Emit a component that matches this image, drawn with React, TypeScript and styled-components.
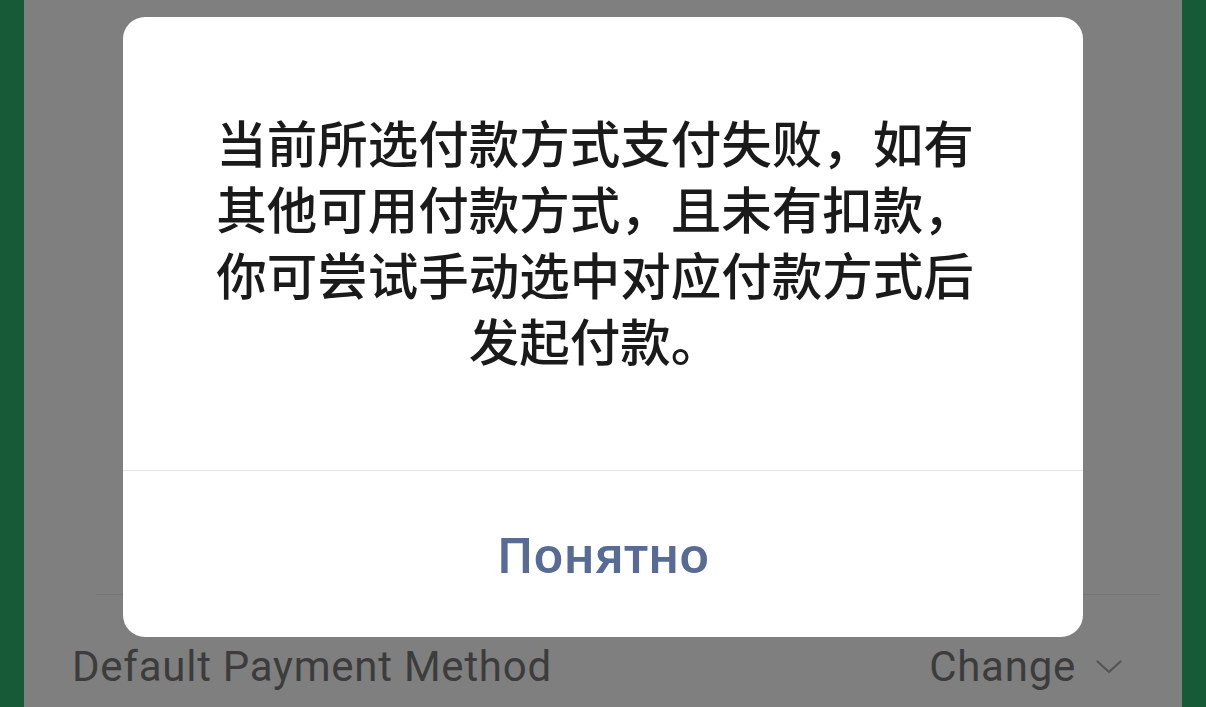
import React from "react";
import styled, { createGlobalStyle } from "styled-components";

const GlobalStyle = createGlobalStyle`
  html, body {
    margin: 0;
    padding: 0;
    width: 1206px;
    height: 707px;
    overflow: hidden;
    background: #175a37;
  }
  * { box-sizing: border-box; }
`;

const Screen = styled.div`
  display: flex;
  width: 1206px;
  height: 707px;
  background: #175a37;
`;

const Edge = styled.div`
  width: 24px;
  flex: none;
  background: #175a37;
`;

const Page = styled.div`
  position: relative;
  flex: 1;
  display: flex;
  flex-direction: column;
  justify-content: flex-end;
  background: #7f7f7f;
  overflow: hidden;
`;

const Divider = styled.div`
  height: 1px;
  margin: 0 22px 0 72px;
  background: #757575;
`;

const SettingRow = styled.div`
  height: 112px;
  display: flex;
  align-items: flex-start;
  justify-content: space-between;
  padding: 44px 60px 0 48px;
  font-family: Roboto, "Noto Sans", sans-serif;
  font-size: 42px;
  letter-spacing: 0.75px;
  line-height: 56px;
  color: #3c3c3c;
`;

const RowLabel = styled.span``;

const RowAction = styled.span`
  display: flex;
  align-items: center;
  gap: 20px;
`;

const Overlay = styled.div`
  position: absolute;
  inset: 0;
  display: flex;
  justify-content: center;
  align-items: flex-start;
  padding-top: 17px;
`;

const Dialog = styled.div`
  width: 960px;
  height: 620px;
  background: #ffffff;
  border-radius: 22px;
  display: flex;
  flex-direction: column;
  overflow: hidden;
`;

const Body = styled.div`
  height: 453px;
  display: flex;
  align-items: center;
  justify-content: center;
  padding: 0 104px 8px 88px;
`;

const Message = styled.div`
  display: flex;
  flex-direction: column;
  align-items: center;
  font-family: "Noto Sans CJK SC", "Noto Sans", sans-serif;
  font-weight: 500;
  font-size: 50.5px;
  color: #1a1a1a;
  white-space: nowrap;
`;

const Line = styled.span`
  display: block;
  height: 66px;
  line-height: 66px;
  text-align: center;
`;

const Footer = styled.div`
  flex: 1;
  border-top: 1px solid #e5e5e5;
  display: flex;
  align-items: center;
  justify-content: center;
`;

const ActionButton = styled.button`
  border: 0;
  background: none;
  padding: 0;
  margin-bottom: 1px;
  font-family: "Noto Sans", "Open Sans", sans-serif;
  font-weight: 600;
  font-size: 49px;
  color: #576b95;
  cursor: pointer;
`;

const Chevron = () => (
  <svg width="26" height="14" viewBox="0 0 26 14" fill="none">
    <path d="M1.5 1.5 L13 12 L24.5 1.5" stroke="#555555" strokeWidth="2.2" strokeLinecap="round" strokeLinejoin="round" />
  </svg>
);

const lines = [
  "当前所选付款方式支付失败，如有",
  "其他可用付款方式，且未有扣款，",
  "你可尝试手动选中对应付款方式后",
  "发起付款。",
];

export default function App() {
  return (
    <>
      <GlobalStyle />
      <Screen>
        <Edge />
        <Page>
          <Divider />
          <SettingRow>
            <RowLabel>Default Payment Method</RowLabel>
            <RowAction>
              Change
              <Chevron />
            </RowAction>
          </SettingRow>
          <Overlay>
            <Dialog role="dialog">
              <Body>
                <Message>
                  {lines.map((l) => (
                    <Line key={l}>{l}</Line>
                  ))}
                </Message>
              </Body>
              <Footer>
                <ActionButton>Понятно</ActionButton>
              </Footer>
            </Dialog>
          </Overlay>
        </Page>
        <Edge />
      </Screen>
    </>
  );
}
